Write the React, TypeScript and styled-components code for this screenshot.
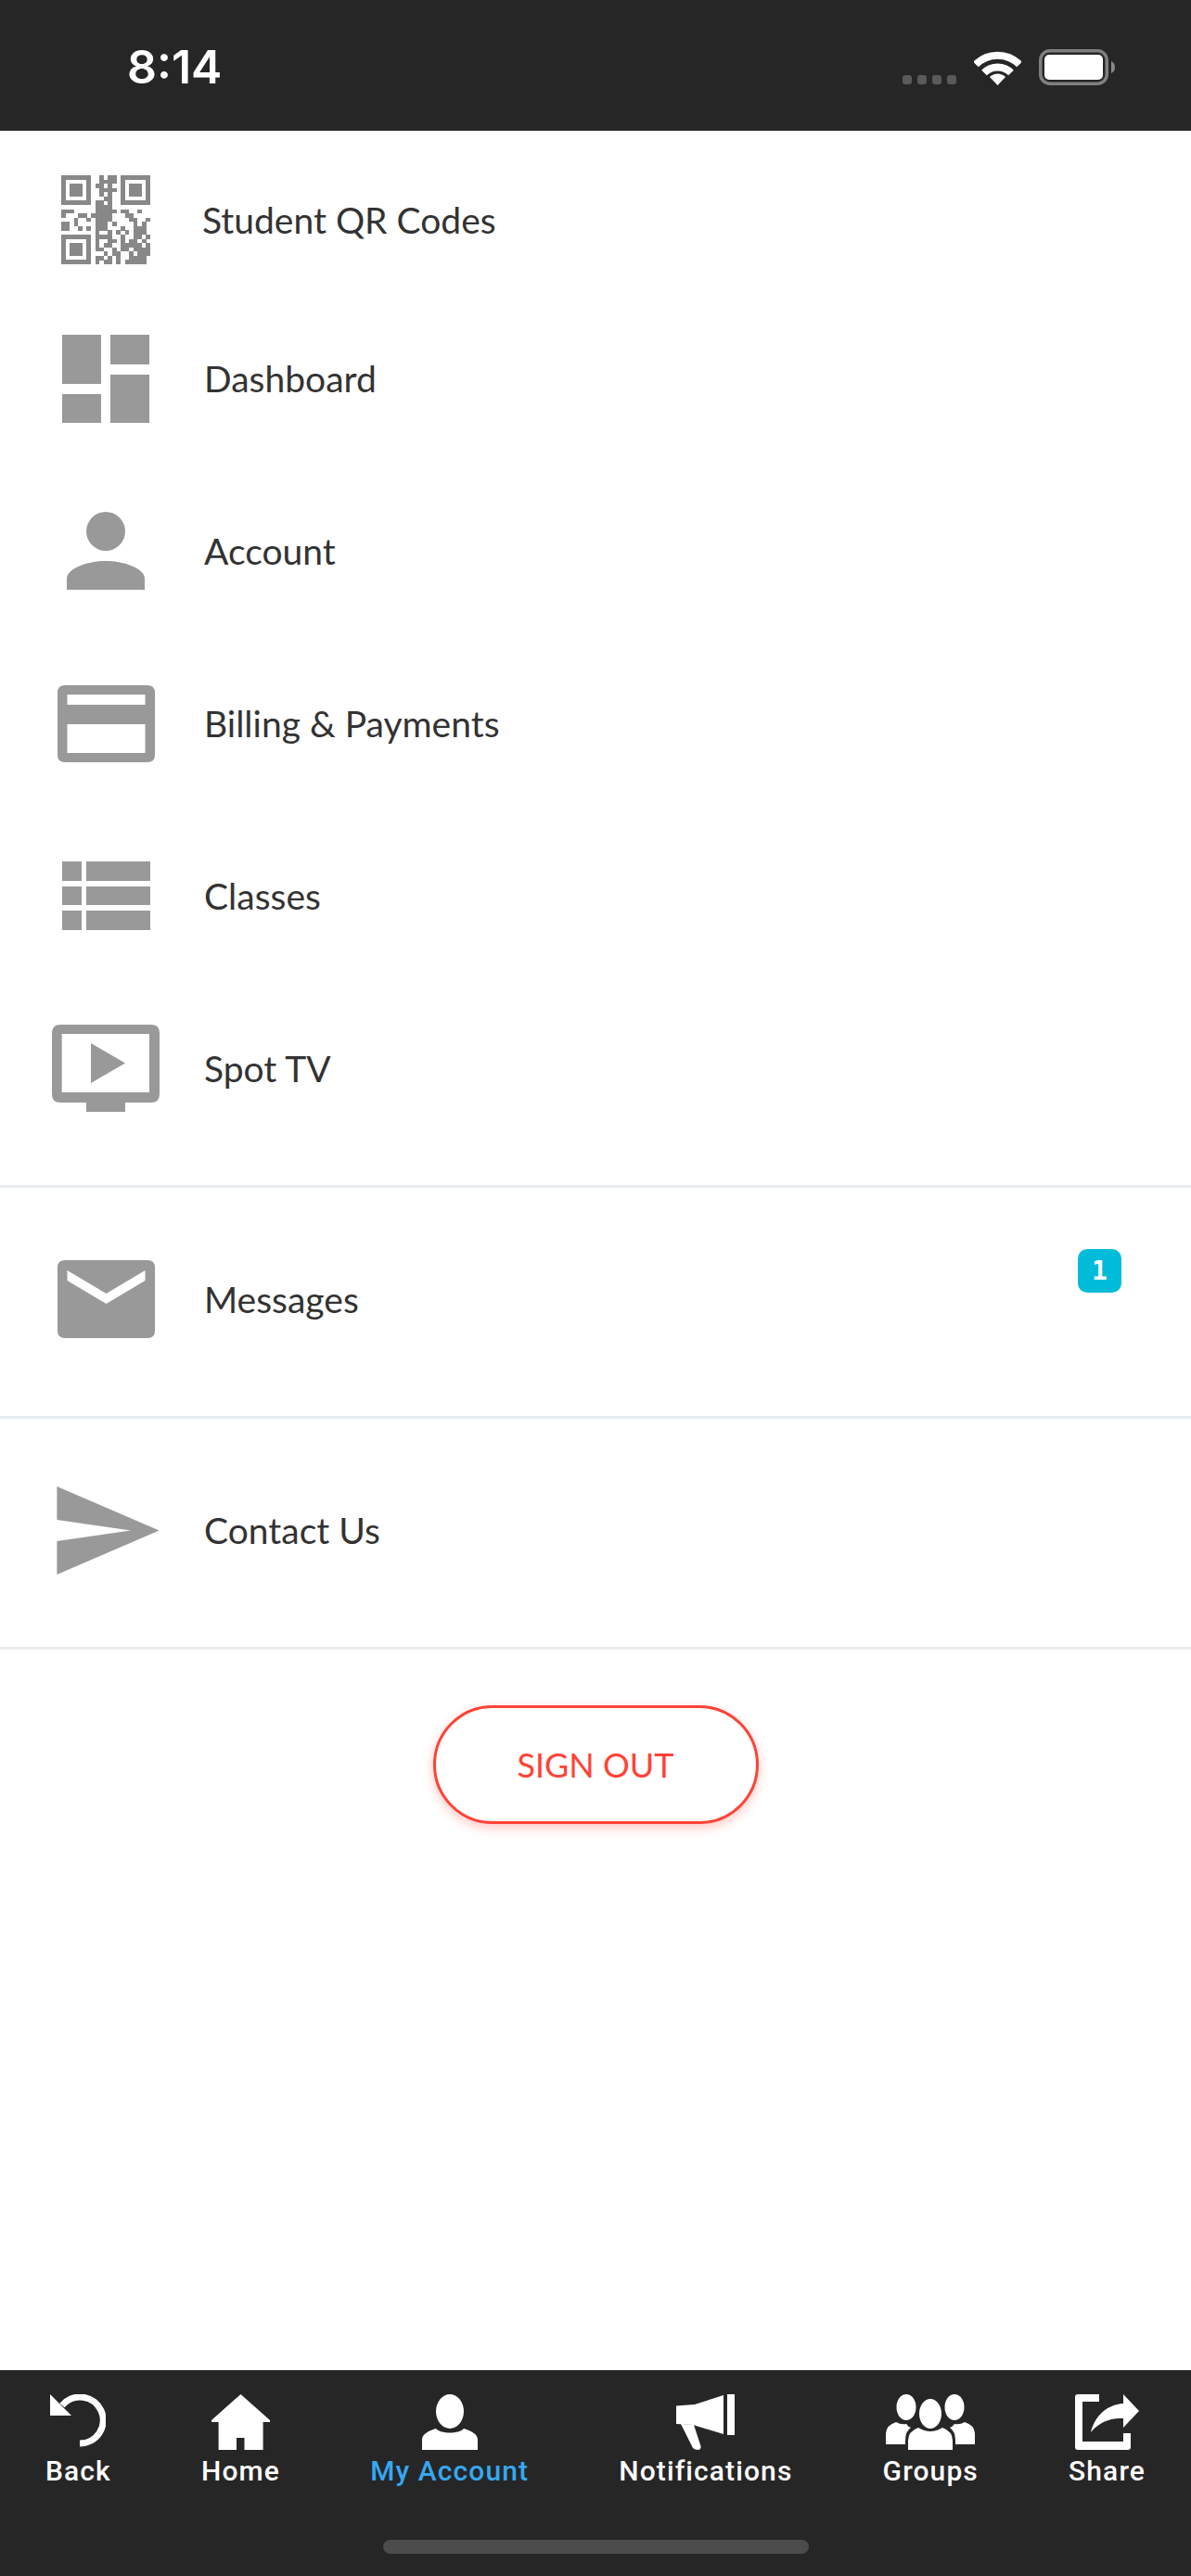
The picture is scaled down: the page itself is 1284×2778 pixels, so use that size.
import React from "react";
import styled, { createGlobalStyle } from "styled-components";

const GlobalStyle = createGlobalStyle`
    html, body {
        margin: 0;
        padding: 0;
        background: #fff;
    }
    * {
        box-sizing: border-box;
    }
`;

const qrRows = [
    "#######..#.##.#######",
    "#.....#..####.#.....#",
    "#.###.#.##.#..#.###.#",
    "#.###.#..####.#.###.#",
    "#.###.#..#.#..#.###.#",
    "#.....#...##..#.....#",
    "#######.##.#..#######",
    "........####.........",
    "###.....#####.##..#..",
    "#...##.#####...##....",
    "...#..#.####....##..#",
    "##.#....###.#....#.#.",
    "##..#.#.###...#..###.",
    "........#..#.#.#.###.",
    "#######.####..#..##.#",
    "#.....#.#..##.#.##.#.",
    "#.###.#.#.##..#####.#",
    "#.###.#.##..#.##.####",
    "#.###.#...#.##..#.###",
    "#.....#.##.#.#..####.",
    "#######.#.##.#.#####.",
];

const QrIcon = () => (
    <MenuIcon $color="#888" width="96" height="96" viewBox="0 0 21 21" shapeRendering="crispEdges">
        {qrRows.map((row, y) =>
            row.split("").map((cell, x) =>
                cell === "#" ? <rect key={`${x}-${y}`} x={x} y={y} width="1.02" height="1.02" /> : null
            )
        )}
    </MenuIcon>
);

const DashboardIcon = () => (
    <MenuIcon width="95" height="95" viewBox="0 0 95 95">
        <rect x="0" y="0" width="42" height="53" />
        <rect x="0" y="64" width="42" height="31" />
        <rect x="52" y="0" width="42" height="32" />
        <rect x="52" y="43" width="42" height="52" />
    </MenuIcon>
);

const AccountIcon = () => (
    <MenuIcon width="84" height="84" viewBox="0 0 84 84">
        <ellipse cx="42" cy="21" rx="21" ry="21" />
        <path d="M0 84 V72 C0 61 22 53 42 53 C62 53 84 61 84 72 V84 Z" />
    </MenuIcon>
);

const BillingIcon = () => (
    <MenuIcon width="105" height="83" viewBox="0 0 105 83">
        <path
            fillRule="evenodd"
            d="M8 0 H97 Q105 0 105 8 V75 Q105 83 97 83 H8 Q0 83 0 75 V8 Q0 0 8 0 Z M10.5 10 V21 H94.5 V10 Z M10.5 42 V73 H94.5 V42 Z"
        />
    </MenuIcon>
);

const ClassesIcon = () => (
    <MenuIcon width="95" height="74" viewBox="0 0 95 74">
        <rect x="0" y="0" width="21" height="21" />
        <rect x="26" y="0" width="69" height="21" />
        <rect x="0" y="27" width="21" height="20" />
        <rect x="26" y="27" width="69" height="20" />
        <rect x="0" y="53" width="21" height="21" />
        <rect x="26" y="53" width="69" height="21" />
    </MenuIcon>
);

const TvIcon = () => (
    <MenuIcon width="116" height="94" viewBox="0 0 116 94">
        <path
            fillRule="evenodd"
            d="M9 0 H107 Q116 0 116 9 V75 Q116 84 107 84 H79 V94 H37 V84 H9 Q0 84 0 75 V9 Q0 0 9 0 Z M10.7 10 V73 H105 V10 Z"
        />
        <path d="M42 20 L79 41.5 L42 63 Z" />
    </MenuIcon>
);

const MailIcon = () => (
    <MenuIcon width="105" height="84" viewBox="0 0 105 84">
        <path
            fillRule="evenodd"
            d="M8 0 H97 Q105 0 105 8 V76 Q105 84 97 84 H8 Q0 84 0 76 V8 Q0 0 8 0 Z M10.5 11 V22 L52.5 47 L94.5 22 V11 L52.5 36 Z"
        />
    </MenuIcon>
);

const SendIcon = () => (
    <MenuIcon width="116" height="95" viewBox="0 0 116 95">
        <path d="M5.4 0 L115.6 47.5 L5.4 95 V59 L85 47.5 L5.4 36 Z" />
    </MenuIcon>
);

const BackIcon = () => (
    <NavIcon width="60" height="60" viewBox="0 0 60 60">
        <path d="M0 0 V23 H23 Z" />
        <path d="M13 12 A25 25 0 1 1 32 53" fill="none" stroke="currentColor" strokeWidth="7" />
    </NavIcon>
);

const HomeIcon = () => (
    <NavIcon width="63" height="60" viewBox="0 0 63 60">
        <path d="M31.5 0 L63 28 V30 H55.6 V60 H35.5 V47 H27 V60 H7.6 V30 H0 V28 Z" />
    </NavIcon>
);

const PersonIcon = () => (
    <NavIcon width="60" height="60" viewBox="0 0 60 60">
        <ellipse cx="30" cy="18.5" rx="15" ry="18.5" />
        <path d="M0 60 V49 C0 42 9 39 15 37 C20 43 40 43 45 37 C51 39 60 42 60 49 V60 Z" />
    </NavIcon>
);

const MegaphoneIcon = () => (
    <NavIcon width="63" height="60" viewBox="0 0 63 60">
        <path d="M0 12.5 L20 11 L51 1 V43 L18 33 L0 32 Z" />
        <path d="M5 32 L18 58 Q20 60 24 60 Q27 59 26.5 56 L19 33 Z" />
        <rect x="55" y="0" width="8" height="44" />
    </NavIcon>
);

const GroupsIcon = () => (
    <NavIcon width="96" height="60" viewBox="0 0 96 60">
        <ellipse cx="22" cy="14" rx="10.5" ry="14" />
        <ellipse cx="74" cy="14" rx="10.5" ry="14" />
        <ellipse cx="48" cy="21" rx="12" ry="16" />
        <path d="M24 60 V50 Q24 40 35 36 Q48 44 61 36 Q72 40 72 50 V60 Z" />
        <path d="M0 54 V42 Q1 33 11 30 Q16 33 22 32 Q24 35 27 36 Q21 40 21 50 V54 Z" />
        <path d="M96 54 V42 Q95 33 85 30 Q80 33 74 32 Q72 35 69 36 Q75 40 75 50 V54 Z" />
    </NavIcon>
);

const ShareIcon = () => (
    <NavIcon width="69" height="60" viewBox="0 0 69 60">
        <path d="M3 0 H26 V8 H8 V51 H52 V42 H60 V57 Q60 60 57 60 H3 Q0 60 0 57 V3 Q0 0 3 0 Z" />
        <path d="M52 0 L69 18 L52 36 V26 C38 25 26 30 17 41 C21 24 34 11 52 10 Z" />
    </NavIcon>
);

const navItems = [
    { label: "Back", icon: <BackIcon /> },
    { label: "Home", icon: <HomeIcon /> },
    { label: "My Account", icon: <PersonIcon />, active: true },
    { label: "Notifications", icon: <MegaphoneIcon /> },
    { label: "Groups", icon: <GroupsIcon /> },
    { label: "Share", icon: <ShareIcon /> },
];

export default function App() {
    return (
        <Screen>
            <GlobalStyle />
            <StatusBar>
                <Clock>8:14</Clock>
                <StatusIcons>
                    <SignalDots>
                        <SignalDot />
                        <SignalDot />
                        <SignalDot />
                        <SignalDot />
                    </SignalDots>
                    <svg width="51" height="38" viewBox="0 0 51 38">
                        <path d="M2 15.5 A33 33 0 0 1 49 15.5" fill="none" stroke="#fff" strokeWidth="8" />
                        <path d="M11 24.5 A20.5 20.5 0 0 1 40 24.5" fill="none" stroke="#fff" strokeWidth="8" />
                        <path d="M25.5 38 L17 29 A12 12 0 0 1 34 29 Z" fill="#fff" />
                    </svg>
                    <svg width="82" height="39" viewBox="0 0 82 39">
                        <rect x="1.75" y="1.75" width="71.5" height="35.5" rx="10" fill="none" stroke="#7f7f7f" strokeWidth="3.5" />
                        <rect x="6" y="6" width="63" height="27" rx="5" fill="#fff" />
                        <path d="M78 13 Q82 15 82 19.5 Q82 24 78 26 Z" fill="#8a8a8a" />
                    </svg>
                </StatusIcons>
            </StatusBar>

            <MenuSection $pad={18} $padBottom={33}>
                <MenuRow $height={156}>
                    <IconSlot><QrIcon /></IconSlot>
                    <MenuLabel $shift={-2}>Student QR Codes</MenuLabel>
                </MenuRow>
                <MenuRow>
                    <IconSlot><DashboardIcon /></IconSlot>
                    <MenuLabel>Dashboard</MenuLabel>
                </MenuRow>
                <MenuRow>
                    <IconSlot><AccountIcon /></IconSlot>
                    <MenuLabel>Account</MenuLabel>
                </MenuRow>
                <MenuRow>
                    <IconSlot><BillingIcon /></IconSlot>
                    <MenuLabel>Billing &amp; Payments</MenuLabel>
                </MenuRow>
                <MenuRow>
                    <IconSlot><ClassesIcon /></IconSlot>
                    <MenuLabel>Classes</MenuLabel>
                </MenuRow>
                <MenuRow>
                    <IconSlot><TvIcon /></IconSlot>
                    <MenuLabel>Spot TV</MenuLabel>
                </MenuRow>
            </MenuSection>

            <MenuSection $padBottom={6}>
                <MenuRow $height={240}>
                    <IconSlot><MailIcon /></IconSlot>
                    <MenuLabel>Messages</MenuLabel>
                    <Badge>1</Badge>
                </MenuRow>
            </MenuSection>

            <MenuSection $padBottom={6}>
                <MenuRow $height={240}>
                    <IconSlot><SendIcon /></IconSlot>
                    <MenuLabel>Contact Us</MenuLabel>
                </MenuRow>
            </MenuSection>

            <SignOutWrap>
                <SignOutButton>SIGN OUT</SignOutButton>
            </SignOutWrap>

            <TabBar>
                <TabList>
                    {navItems.map((item) => (
                        <TabItem key={item.label} $active={item.active}>
                            {item.icon}
                            <TabLabel>{item.label}</TabLabel>
                        </TabItem>
                    ))}
                </TabList>
                <HomeIndicator />
            </TabBar>
        </Screen>
    );
}

const Screen = styled.div`
    width: 1284px;
    height: 2778px;
    display: flex;
    flex-direction: column;
    background: #fff;
    overflow: hidden;
`;

const StatusBar = styled.header`
    height: 141px;
    flex-shrink: 0;
    background: #262626;
    display: flex;
    justify-content: space-between;
    align-items: flex-end;
    padding: 0 82px 49px 137px;
`;

const Clock = styled.span`
    font-family: Inter, "Liberation Sans", sans-serif;
    font-weight: 600;
    font-size: 50px;
    line-height: 50px;
    color: #fff;
    margin-bottom: -5px;
`;

const StatusIcons = styled.div`
    display: flex;
    align-items: flex-end;
    gap: 19px;
`;

const SignalDots = styled.div`
    display: flex;
    gap: 6px;
    margin-bottom: 1px;
`;

const SignalDot = styled.span`
    width: 10px;
    height: 10px;
    border-radius: 3px;
    background: #5a5a5a;
`;

const MenuSection = styled.section<{ $pad?: number; $padBottom?: number }>`
    padding-top: ${(p) => p.$pad ?? 0}px;
    padding-bottom: ${(p) => p.$padBottom ?? 0}px;
    border-bottom: 3px solid #e9edf0;
`;

const MenuRow = styled.div<{ $height?: number }>`
    position: relative;
    height: ${(p) => p.$height ?? 186}px;
    display: flex;
    align-items: center;
    padding-left: 56px;
`;

const IconSlot = styled.div`
    width: 116px;
    display: flex;
    justify-content: center;
    margin-right: 48px;
    flex-shrink: 0;
`;

const MenuIcon = styled.svg<{ $color?: string }>`
    display: block;
    fill: ${(p) => p.$color ?? "#999"};
`;

const MenuLabel = styled.span<{ $shift?: number }>`
    font-family: Lato, "Liberation Sans", sans-serif;
    font-size: 39px;
    font-weight: 400;
    color: #333;
    margin-left: ${(p) => p.$shift ?? 0}px;
`;

const Badge = styled.span`
    position: absolute;
    top: 66px;
    right: 75px;
    width: 47px;
    height: 47px;
    border-radius: 10px;
    background: #00bcd9;
    color: #fff;
    font-family: "DejaVu Sans Mono", monospace;
    font-weight: 700;
    font-size: 28px;
    display: flex;
    align-items: center;
    justify-content: center;
`;

const SignOutWrap = styled.div`
    flex: 1;
    display: flex;
    justify-content: center;
    align-items: flex-start;
    padding-top: 60px;
`;

const SignOutButton = styled.button`
    width: 351px;
    height: 128px;
    border: 3px solid #ff4236;
    border-radius: 64px;
    background: #fff;
    color: #ff4236;
    font-family: Lato, "Liberation Sans", sans-serif;
    font-size: 36px;
    font-weight: 400;
    box-shadow: 0 4px 12px rgba(255, 66, 54, 0.3);
    padding: 0;
`;

const TabBar = styled.nav`
    height: 222px;
    flex-shrink: 0;
    background: #262626;
    display: flex;
    flex-direction: column;
    align-items: center;
    padding-top: 26px;
`;

const TabList = styled.div`
    width: 100%;
    display: flex;
    justify-content: space-between;
    padding: 0 49px;
`;

const TabItem = styled.div<{ $active?: boolean }>`
    display: flex;
    flex-direction: column;
    align-items: center;
    color: ${(p) => (p.$active ? "#35a8f0" : "#fff")};
    svg {
        color: #fff;
    }
`;

const NavIcon = styled.svg`
    display: block;
    fill: currentColor;
`;

const TabLabel = styled.span`
    font-family: Roboto, "Liberation Sans", sans-serif;
    font-weight: 500;
    font-size: 30px;
    letter-spacing: 1.1px;
    line-height: 34px;
    margin-top: 6px;
`;

const HomeIndicator = styled.div`
    width: 459px;
    height: 15px;
    border-radius: 8px;
    background: #4c4c4c;
    margin-top: 57px;
`;
